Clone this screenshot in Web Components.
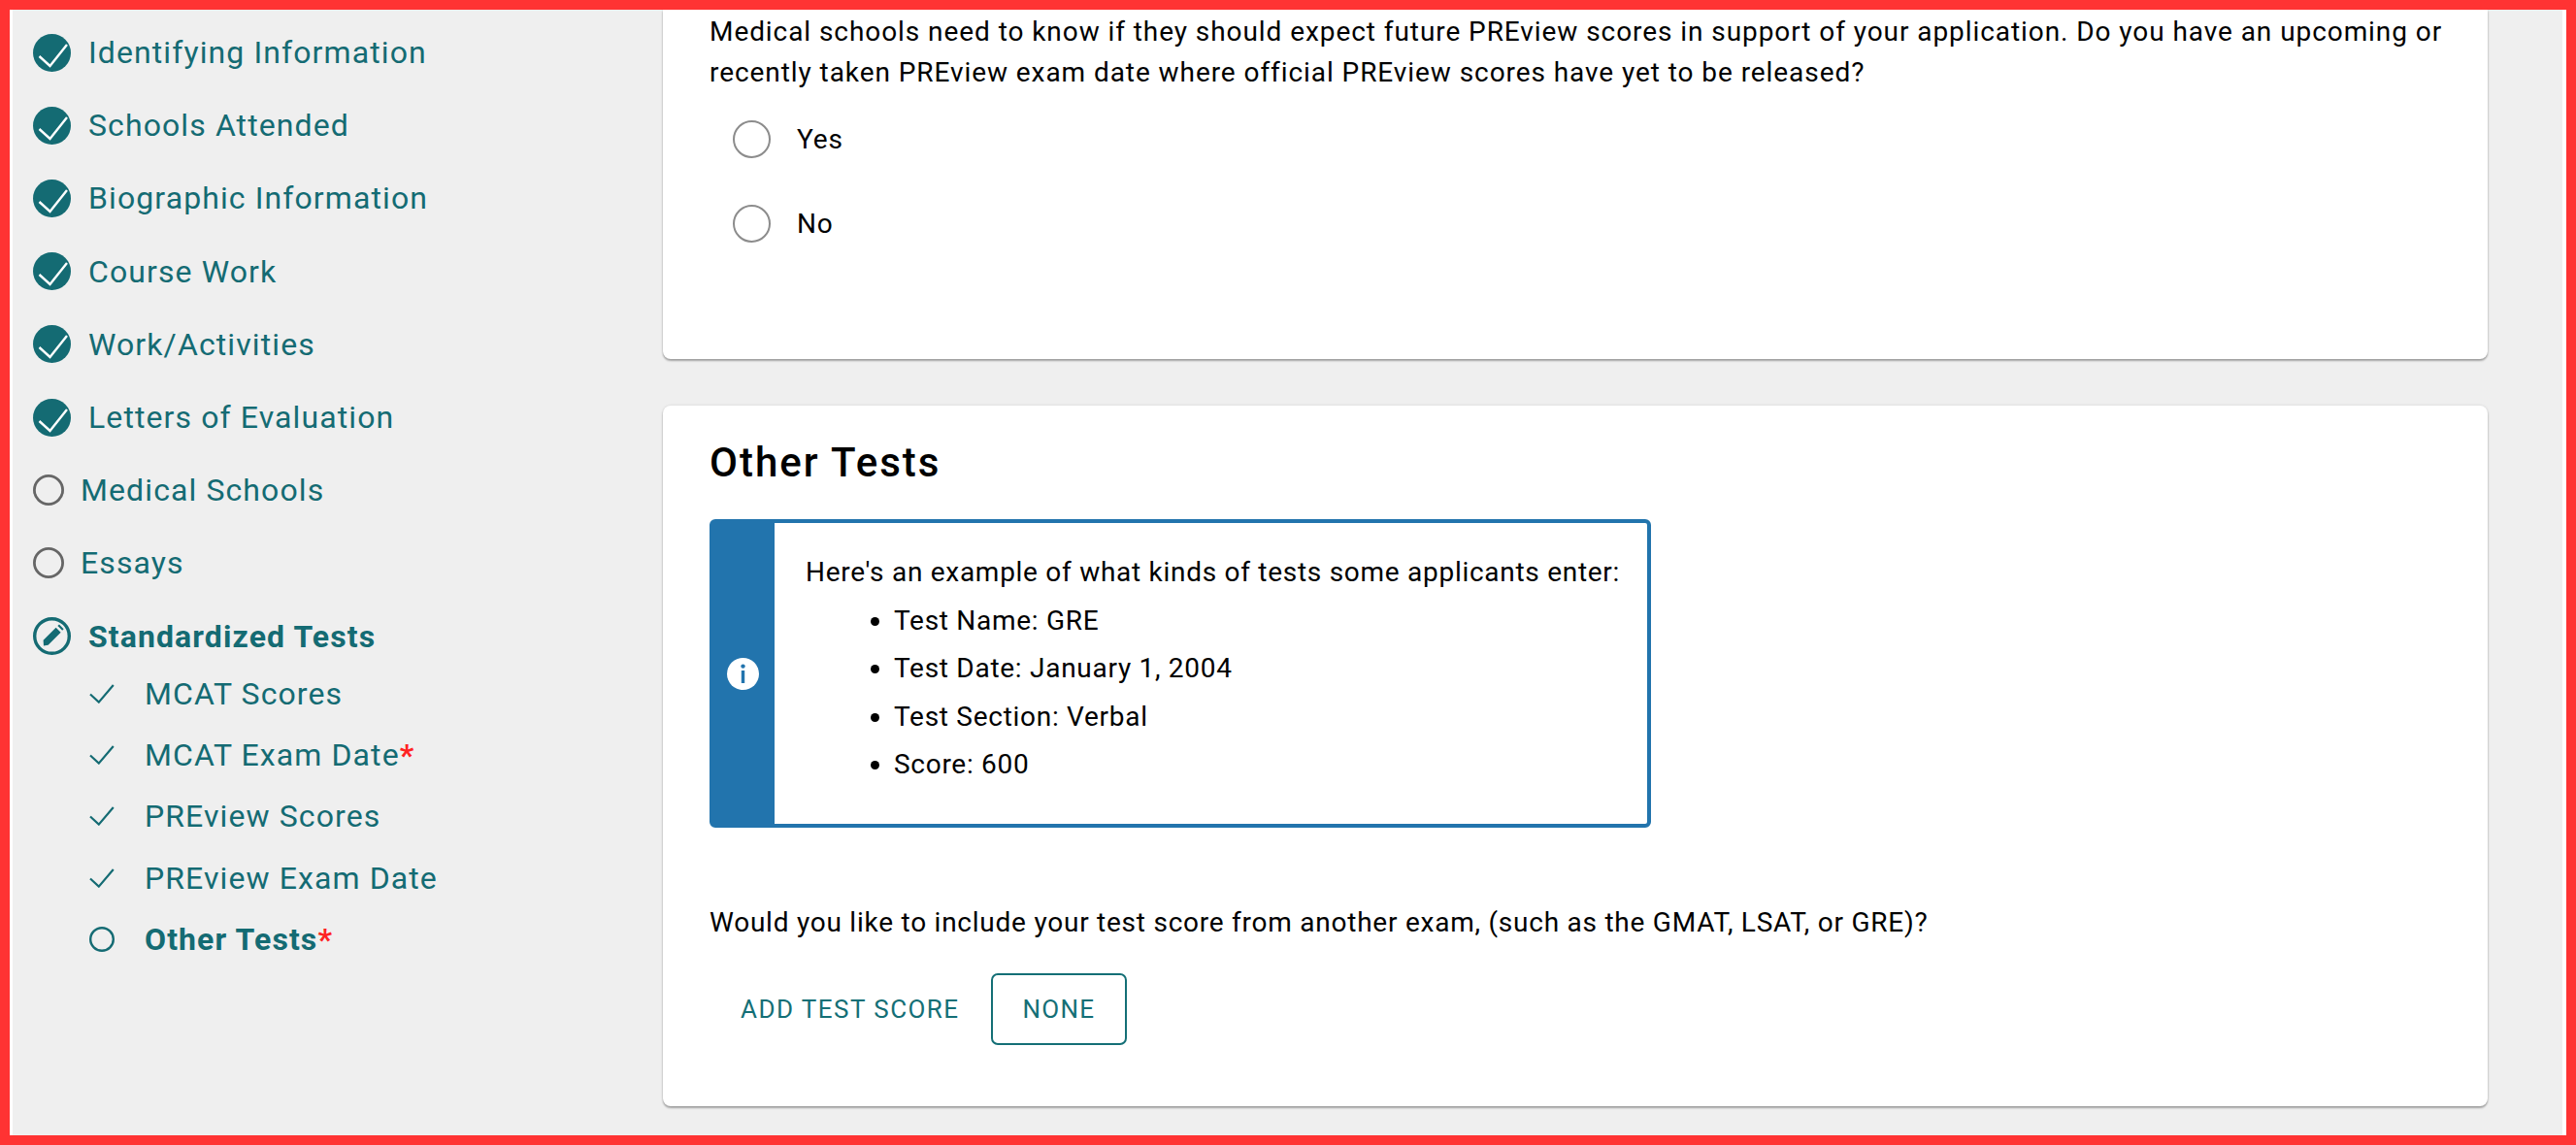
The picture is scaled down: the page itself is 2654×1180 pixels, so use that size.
<!DOCTYPE html>
<html>
<head>
<meta charset="utf-8">
<title>Other Tests</title>
<style>
  html, body { margin: 0; height: 100%; overflow: hidden; background: #ff3333; }
  body { font-family: Roboto, "Liberation Sans", sans-serif; }
</style>
</head>
<body>
<app-frame>
  <side-nav slot="nav">
    <nav-item state="done">Identifying Information</nav-item>
    <nav-item state="done">Schools Attended</nav-item>
    <nav-item state="done">Biographic Information</nav-item>
    <nav-item state="done">Course Work</nav-item>
    <nav-item state="done">Work/Activities</nav-item>
    <nav-item state="done">Letters of Evaluation</nav-item>
    <nav-item state="todo">Medical Schools</nav-item>
    <nav-item state="todo">Essays</nav-item>
    <nav-item state="edit">Standardized Tests</nav-item>
    <nav-sub-item state="done">MCAT Scores</nav-sub-item>
    <nav-sub-item state="done" required>MCAT Exam Date</nav-sub-item>
    <nav-sub-item state="done">PREview Scores</nav-sub-item>
    <nav-sub-item state="done">PREview Exam Date</nav-sub-item>
    <nav-sub-item state="current" required>Other Tests</nav-sub-item>
  </side-nav>

  <form-card class="first" style="--card-pad: 2px 40px 0 48px; --card-height: 360px; --card-radius: 0 0 8px 8px">
    <p-text style="--pt-ls: .93px">Medical schools need to know if they should expect future PREview scores in support of your application. Do you have an upcoming or recently taken PREview exam date where official PREview scores have yet to be released?</p-text>
    <radio-option style="margin-top: 4px">Yes</radio-option>
    <radio-option>No</radio-option>
  </form-card>

  <form-card heading="Other Tests" style="--card-pad: 31px 48px 0; --card-height: 722px">
    <info-callout>
      <div>Here's an example of what kinds of tests some applicants enter:</div>
      <ul>
        <li>Test Name: GRE</li>
        <li>Test Date: January 1, 2004</li>
        <li>Test Section: Verbal</li>
        <li>Score: 600</li>
      </ul>
    </info-callout>
    <p-text style="--pt-gap: 77px; --pt-ls: .76px">Would you like to include your test score from another exam, (such as the GMAT, LSAT, or GRE)?</p-text>
    <div style="display: flex; margin-top: 31px">
      <action-button style="letter-spacing: 1.45px">ADD TEST SCORE</action-button>
      <action-button outlined>NONE</action-button>
    </div>
  </form-card>
</app-frame>

<script>
  const TEAL = '#146b73';

  const ICONS = {
    done: `<svg width="39" height="39" viewBox="0 0 39 39"><circle cx="19.5" cy="19.5" r="19.5" fill="${TEAL}"/><path d="M6.5 23 L17.5 33 L35 11" fill="none" stroke="#fff" stroke-width="2.4"/></svg>`,
    todo: `<svg width="32" height="32" viewBox="0 0 32 32"><circle cx="16" cy="16" r="14.6" fill="none" stroke="#666" stroke-width="2.8"/></svg>`,
    edit: `<svg width="39" height="39" viewBox="0 0 39 39"><circle cx="19.5" cy="19.5" r="17.8" fill="none" stroke="${TEAL}" stroke-width="3.4"/><path d="M11 29.5 L10.6 23.8 L23.6 10.8 L28.6 15.8 L15.6 28.8 Z" fill="${TEAL}"/><path d="M25.4 9 L27 7.6 L31.6 12.2 L30.2 13.8 Z" fill="${TEAL}"/></svg>`,
    subDone: `<svg width="26" height="20" viewBox="0 0 26 20"><path d="M1 10.5 L9.8 18.6 L24.8 1" fill="none" stroke="${TEAL}" stroke-width="2.2"/></svg>`,
    subCurrent: `<svg width="26" height="26" viewBox="0 0 26 26"><circle cx="13" cy="13" r="11.8" fill="none" stroke="${TEAL}" stroke-width="2.4"/></svg>`,
  };

  class AppFrame extends HTMLElement {
    constructor() {
      super();
      this.attachShadow({ mode: 'open' });
      this.shadowRoot.innerHTML = `
        <style>
          :host {
            display: block;
            box-sizing: border-box;
            height: 1180px;
            width: 2654px;
            border: 10px solid #ff3333;
            overflow: hidden;
          }
          .page {
            display: grid;
            grid-template-columns: 670px 1880px;
            height: 100%;
            background: #efefef;
            border-left: 3px solid #fff;
            border-right: 4px solid #fff;
            box-sizing: border-box;
          }
          .main {
            display: flex;
            flex-direction: column;
            gap: 48px;
          }
        </style>
        <div class="page">
          <slot name="nav"></slot>
          <div class="main"><slot></slot></div>
        </div>
      `;
    }
  }

  class SideNav extends HTMLElement {
    constructor() {
      super();
      this.attachShadow({ mode: 'open' });
      this.shadowRoot.innerHTML = `
        <style>
          :host {
            display: flex;
            flex-direction: column;
            padding: 6.5px 0 0 21px;
            color: ${TEAL};
          }
        </style>
        <slot></slot>
      `;
    }
  }

  class NavItem extends HTMLElement {
    constructor() {
      super();
      this.attachShadow({ mode: 'open' });
    }

    connectedCallback() {
      const state = this.getAttribute('state') || 'todo';
      this.shadowRoot.innerHTML = `
        <style>
          :host {
            display: flex;
            align-items: center;
            height: 75.2px;
            font-size: 32px;
            letter-spacing: 1.1px;
            font-weight: ${state === 'edit' ? 700 : 400};
            margin-bottom: ${state === 'edit' ? -10 : 0}px;
          }
          .icon { display: flex; width: ${state === 'todo' ? 49 : 57}px; flex: none; }
          svg { display: block; }
        </style>
        <span class="icon">${ICONS[state]}</span>
        <span><slot></slot></span>
      `;
    }
  }

  class NavSubItem extends HTMLElement {
    constructor() {
      super();
      this.attachShadow({ mode: 'open' });
    }

    connectedCallback() {
      const current = this.getAttribute('state') === 'current';
      const star = this.hasAttribute('required') ? '<span class="star">*</span>' : '';
      this.shadowRoot.innerHTML = `
        <style>
          :host {
            display: flex;
            align-items: center;
            height: 63.3px;
            padding-left: 58px;
            font-size: 32px;
            letter-spacing: 1.1px;
            font-weight: ${current ? 700 : 400};
          }
          .icon { display: flex; width: 57px; flex: none; }
          .star { color: #f22; font-weight: 700; letter-spacing: 0; }
          svg { display: block; }
        </style>
        <span class="icon">${current ? ICONS.subCurrent : ICONS.subDone}</span>
        <span><slot></slot>${star}</span>
      `;
    }
  }

  class FormCard extends HTMLElement {
    constructor() {
      super();
      this.attachShadow({ mode: 'open' });
    }

    connectedCallback() {
      const heading = this.getAttribute('heading');
      this.shadowRoot.innerHTML = `
        <style>
          :host {
            display: block;
            box-sizing: border-box;
            height: var(--card-height, auto);
            padding: var(--card-pad, 32px 48px);
            background: #fff;
            border-radius: var(--card-radius, 8px);
            box-shadow: 0 2px 2px rgba(0, 0, 0, .3), 0 0 3px rgba(0, 0, 0, .12);
            color: #000;
          }
          h2 {
            margin: 0 0 30px;
            font-size: 42px;
            line-height: 56px;
            font-weight: 500;
            letter-spacing: 2px;
          }
        </style>
        ${heading ? `<h2>${heading}</h2>` : ''}
        <slot></slot>
      `;
    }
  }

  class PText extends HTMLElement {
    constructor() {
      super();
      this.attachShadow({ mode: 'open' });
      this.shadowRoot.innerHTML = `
        <style>
          :host {
            display: block;
            margin-top: var(--pt-gap, 0);
            font-size: 28px;
            line-height: 42px;
            letter-spacing: var(--pt-ls, .8px);
          }
        </style>
        <slot></slot>
      `;
    }
  }

  class RadioOption extends HTMLElement {
    constructor() {
      super();
      this.attachShadow({ mode: 'open' });
      this.shadowRoot.innerHTML = `
        <style>
          :host {
            display: flex;
            align-items: center;
            height: 87px;
            padding-left: 24px;
            font-size: 28px;
            letter-spacing: .9px;
          }
          .dot {
            box-sizing: border-box;
            width: 39px;
            height: 39px;
            margin-right: 27px;
            border: 2px solid #8c8c8c;
            border-radius: 50%;
          }
        </style>
        <span class="dot"></span>
        <span><slot></slot></span>
      `;
    }
  }

  class InfoCallout extends HTMLElement {
    constructor() {
      super();
      this.attachShadow({ mode: 'open' });
      this.shadowRoot.innerHTML = `
        <style>
          :host {
            display: flex;
            box-sizing: border-box;
            width: 970px;
            height: 318px;
            border: 4px solid #2274ad;
            border-radius: 6px;
            font-size: 28px;
            letter-spacing: .72px;
          }
          .bar {
            flex: none;
            box-sizing: border-box;
            width: 63px;
            padding-right: 3px;
            display: flex;
            align-items: center;
            justify-content: center;
            background: #2274ad;
          }
          .body { padding: 26px 0 0 32px; line-height: 49.5px; }
          svg { display: block; }
          ::slotted(ul) {
            margin: 0;
            padding: 0 0 0 91px;
          }
        </style>
        <div class="bar">
          <svg width="33" height="33" viewBox="0 0 33 33">
            <circle cx="16.5" cy="16.5" r="16.5" fill="#fff"/>
            <circle cx="16.5" cy="8.6" r="2.2" fill="#2274ad"/>
            <rect x="14.8" y="13" width="3.4" height="13" fill="#2274ad"/>
          </svg>
        </div>
        <div class="body"><slot></slot></div>
      `;
    }
  }

  class ActionButton extends HTMLElement {
    constructor() {
      super();
      this.attachShadow({ mode: 'open' });
      this.shadowRoot.innerHTML = `
        <style>
          :host {
            display: inline-flex;
            align-items: center;
            box-sizing: border-box;
            height: 74px;
            padding: 0 30px;
            border: 2px solid transparent;
            border-radius: 7px;
            font-size: 26px;
            letter-spacing: 1.2px;
            color: #146f76;
          }
          :host([outlined]) { border-color: #146f76; padding: 0 31px; }
        </style>
        <slot></slot>
      `;
    }
  }

  customElements.define('app-frame', AppFrame);
  customElements.define('side-nav', SideNav);
  customElements.define('nav-item', NavItem);
  customElements.define('nav-sub-item', NavSubItem);
  customElements.define('form-card', FormCard);
  customElements.define('p-text', PText);
  customElements.define('radio-option', RadioOption);
  customElements.define('info-callout', InfoCallout);
  customElements.define('action-button', ActionButton);
</script>
</body>
</html>
